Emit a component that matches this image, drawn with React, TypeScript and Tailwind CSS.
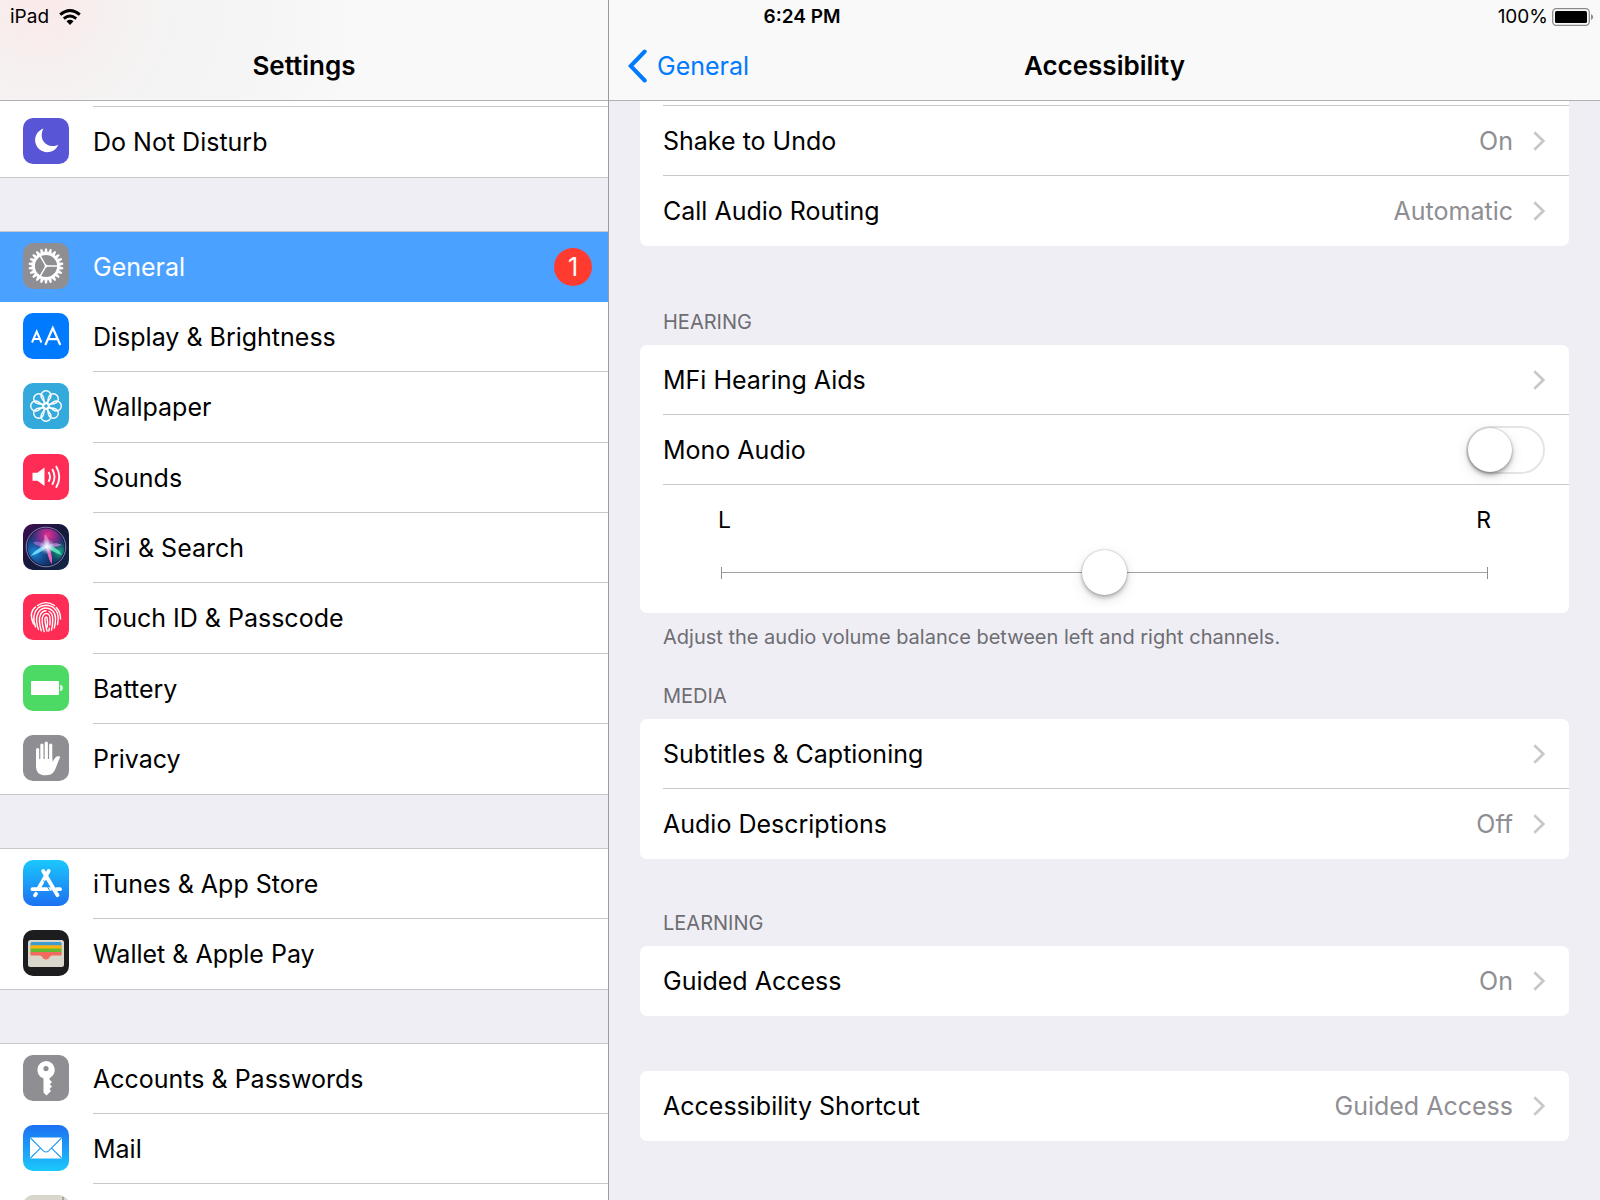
import React from "react";

/* ---------- app icons, drawn on a 46 x 46 tile ---------- */

function Tile({ fill, children }: { fill: string; children?: React.ReactNode }) {
  return (
    <svg viewBox="0 0 46 46" className="size-[46px] shrink-0" aria-hidden="true">
      <rect width="46" height="46" rx="10" fill={fill} />
      {children}
    </svg>
  );
}

const MoonIcon = () => (
  <Tile fill="#5856d6">
    <path
      d="M20.5 10.5 C14 13 11 19 12.500 25 C14.500 32 21 35.500 27.500 33.800 C31.500 32.700 34.200 30 35.200 26.500 C32.500 28.300 28 29 24 26.500 C18.500 23.500 17.200 16.500 20.500 10.500Z"
      fill="#fff"
    />
  </Tile>
);

const TEETH = Array.from({ length: 22 }, (_, i) => (i * 360) / 22);

const GearIcon = () => (
  <Tile fill="#8e8e93">
    <g transform="translate(23 23)">
      {TEETH.map((a) => (
        <path key={a} d="M-1.800 -13 L-0.900 -17.400 H0.900 L1.800 -13Z" fill="#fff" transform={`rotate(${a})`} />
      ))}
      <circle r="12.400" fill="none" stroke="#fff" strokeWidth="2.600" />
      <path d="M0 0 H12 M0 0 L-6 -10.400 M0 0 L-6 10.400" stroke="#fff" strokeWidth="1.500" />
      <circle r="1.500" fill="#fff" />
    </g>
  </Tile>
);

const DisplayIcon = () => (
  <Tile fill="#007aff">
    <path
      d="M9 29.500 L13.700 18.500 L18.400 29.500 M10.700 26 H16.700"
      fill="none"
      stroke="#fff"
      strokeWidth="2"
    />
    <path d="M22.300 32 L29.800 15 L37.300 32 M24.900 26.200 H34.700" fill="none" stroke="#fff" strokeWidth="2.200" />
  </Tile>
);

const PETALS = [0, 45, 90, 135, 180, 225, 270, 315];

const WallpaperIcon = () => (
  <Tile fill="#34aadc">
    <g transform="translate(23 23)" fill="none" stroke="#fff" strokeWidth="1.400">
      {PETALS.map((a) => (
        <path
          key={a}
          d="M0 -2.500 C-2.500 -5 -5 -7.500 -5 -10.300 A5 5 0 0 1 5 -10.300 C5 -7.500 2.500 -5 0 -2.500Z"
          transform={`rotate(${a})`}
        />
      ))}
      <circle r="2.500" />
    </g>
  </Tile>
);

const SoundsIcon = () => (
  <Tile fill="#ff2d55">
    <path d="M9.500 18.800 H14.500 L21.500 13.500 V32 L14.500 26.800 H9.500Z" fill="#fff" />
    <g fill="none" stroke="#fff" strokeWidth="1.900">
      <path d="M25.500 18 Q28.500 22.900 25.500 27.800" />
      <path d="M29.200 15 Q33.800 22.900 29.200 30.800" />
      <path d="M33 12 Q39.500 22.900 33 33.800" />
    </g>
  </Tile>
);

const SiriIcon = () => (
  <svg viewBox="0 0 46 46" className="size-[46px] shrink-0" aria-hidden="true">
    <defs>
      <linearGradient id="siriBg" x1="0" y1="0" x2="1" y2="1">
        <stop offset="0" stopColor="#3d0f52" />
        <stop offset="0.500" stopColor="#15183a" />
        <stop offset="1" stopColor="#132748" />
      </linearGradient>
      <radialGradient id="siriPink" cx="0.550" cy="0.180" r="0.500">
        <stop offset="0" stopColor="#e8308a" />
        <stop offset="0.500" stopColor="#a82c9a" stopOpacity="0.700" />
        <stop offset="1" stopColor="#5b2ca0" stopOpacity="0" />
      </radialGradient>
      <radialGradient id="siriBlue" cx="0.200" cy="0.650" r="0.550">
        <stop offset="0" stopColor="#1b8fe0" />
        <stop offset="1" stopColor="#184a9a" stopOpacity="0" />
      </radialGradient>
      <radialGradient id="siriGreen" cx="0.850" cy="0.620" r="0.380">
        <stop offset="0" stopColor="#1bb58a" />
        <stop offset="1" stopColor="#0b4a60" stopOpacity="0" />
      </radialGradient>
      <radialGradient id="siriCore">
        <stop offset="0" stopColor="#fff" />
        <stop offset="0.400" stopColor="#e6f5ff" stopOpacity="0.700" />
        <stop offset="1" stopColor="#b8e4ff" stopOpacity="0" />
      </radialGradient>
    </defs>
    <rect width="46" height="46" rx="10" fill="url(#siriBg)" />
    <circle cx="23" cy="23" r="18.500" fill="#122a5c" />
    <circle cx="23" cy="23" r="18.500" fill="url(#siriBlue)" />
    <circle cx="23" cy="23" r="18.500" fill="url(#siriGreen)" />
    <circle cx="23" cy="23" r="18.500" fill="url(#siriPink)" />
    <path d="M24 21 C18 22 12 27 7.500 32 C13 30.500 20 27 24 23Z" fill="#7fe9ff" opacity="0.850" />
    <path d="M24 21 C31 22 36 26 39 31 C33 29.500 27 26 23 23Z" fill="#5ff0c0" opacity="0.850" />
    <path d="M23 21 C24 28 25 34 28.500 40 C30 34 28 27 25 21Z" fill="#ff6ac0" opacity="0.900" />
    <path d="M23 22 C21 18 20.500 14 22 10 C26 14 26.500 18 25 22Z" fill="#f59ad8" opacity="0.650" />
    <path d="M24 22 C29 18.500 34 18.500 39 21 C34 23 29 23.500 24 23Z" fill="#c9a0e8" opacity="0.650" />
    <path d="M23 22 C18 18 14 17 10 18.500 C13 21.500 18 23 23 23.500Z" fill="#b48ae8" opacity="0.550" />
    <circle cx="24" cy="22.500" r="8" fill="url(#siriCore)" />
    <circle cx="23" cy="23" r="19.800" fill="none" stroke="#8d8bb8" strokeWidth="0.900" />
  </svg>
);

const TouchIdIcon = () => (
  <Tile fill="#ff2d55">
    <g fill="none" stroke="#fff" strokeWidth="1.400" strokeLinecap="round">
      <path d="M14.500 11.500 Q23 5.800 31.500 11.500" />
      <path d="M33.300 13.500 Q37.500 18 37.600 25" />
      <path d="M10.500 30 C7 22 8.500 16 12.500 13" />
      <path d="M12.600 33 C10.500 28 10.500 25 11 22 C12.500 14 18 11.300 23 11.300 C30 11.300 35 16.500 35.200 24 Q35.200 27.500 34.500 30.500" />
      <path d="M15.500 35.500 C13.500 30 13 26 14 22 C15.500 16.500 19 14 23 14 C28 14 32.400 18 32.500 24 C32.500 28 32.200 31 31.300 34" />
      <path d="M18.300 36.800 C16.300 30 16 27 16.600 23.500 C17.300 19.500 19.500 17 23 16.800" />
      <path d="M26 17.500 Q29.700 19.500 29.700 24.500 C29.800 29 29.500 32.500 28.500 36" />
      <path d="M21.200 37.500 C19.200 31 18.800 27 19.300 24 C20 21 21.500 19.600 23.200 19.600 C25.500 19.600 27 21.800 27 24.500 Q27.200 28 26.900 31" />
      <path d="M26.300 34.200 L25.800 37" />
      <path d="M24 37 C22.500 31 21.700 27 22 24.500 Q22.700 22 24 23.600 C24.600 26 24.600 30 24.300 33" />
    </g>
  </Tile>
);

const BatteryIcon = () => (
  <Tile fill="#4cd964">
    <rect x="8" y="16" width="28" height="14" rx="1" fill="#fff" />
    <path d="M37.300 19.800 C40.600 20.300 40.600 25.700 37.300 26.200Z" fill="#fff" />
  </Tile>
);

const HandIcon = () => (
  <Tile fill="#8e8e93">
    <g stroke="#fff" strokeWidth="3.200" strokeLinecap="round" fill="none">
      <path d="M14.600 14.500 V27" />
      <path d="M18.900 10 V26" />
      <path d="M23.300 8.200 V26" />
      <path d="M27.700 10.200 V27" />
    </g>
    <path
      d="M13 24 H29.300 V26.800 C31 25.500 32 21.800 34.500 21.300 C36 21 37.600 21.300 37 22.500 C34.800 27 33.500 32 31.300 36 C29.500 39.300 26.500 40.300 22.500 40.300 C16.500 40.300 13.300 37.500 13 31.500Z"
      fill="#fff"
    />
  </Tile>
);

const AppStoreIcon = () => (
  <svg viewBox="0 0 46 46" className="size-[46px] shrink-0" aria-hidden="true">
    <defs>
      <linearGradient id="storeBg" x1="0" y1="0" x2="0" y2="1">
        <stop offset="0" stopColor="#1bc8fb" />
        <stop offset="1" stopColor="#1d70f2" />
      </linearGradient>
    </defs>
    <rect width="46" height="46" rx="10" fill="url(#storeBg)" />
    <g stroke="#fff" strokeWidth="3.800" strokeLinecap="round" fill="none">
      <path d="M9.500 29.200 H27" />
      <path d="M33.500 29.200 H37" />
      <path d="M25.700 11 L15.800 28" />
      <path d="M13 33.800 L12 35.300" />
      <path d="M20.200 11 L34.500 35.200" />
    </g>
    <path d="M20.500 20.500 L28 32.500" stroke="#1f96f7" strokeWidth="1" />
  </svg>
);

const WalletIcon = () => (
  <Tile fill="#1d1d1f">
    <rect x="5" y="10" width="36" height="27" rx="2.500" fill="#d9d6cb" />
    <rect x="7.500" y="12" width="31" height="7" rx="1.500" fill="#3e9bd0" />
    <rect x="7.500" y="15.300" width="31" height="6" rx="1" fill="#fdb210" />
    <rect x="7.500" y="18.600" width="31" height="6" rx="1" fill="#62bb32" />
    <path
      d="M7.500 22 H38.500 V25.500 H29 C26.500 25.500 26.500 29.500 23 29.500 C19.500 29.500 19.500 25.500 17 25.500 H7.500Z"
      fill="#f26b5e"
    />
  </Tile>
);

const KeyIcon = () => (
  <Tile fill="#8e8e93">
    <path
      fillRule="evenodd"
      d="M23 6 A9 9 0 0 1 26.500 23.200 V24.500 L29 27 L26.800 29.300 L29 31.500 L26.500 34 L28 36 L23.500 40.500 L20.500 37.500 V23.500 A9 9 0 0 1 23 6Z M23 11 A2.600 2.600 0 1 0 23 16.200 A2.600 2.600 0 1 0 23 11Z"
      fill="#fff"
    />
  </Tile>
);

const MailIcon = () => (
  <svg viewBox="0 0 46 46" className="size-[46px] shrink-0" aria-hidden="true">
    <defs>
      <linearGradient id="mailBg" x1="0" y1="0" x2="0" y2="1">
        <stop offset="0" stopColor="#1d70f2" />
        <stop offset="1" stopColor="#1bc8fb" />
      </linearGradient>
    </defs>
    <rect width="46" height="46" rx="10" fill="url(#mailBg)" />
    <rect x="7" y="12.500" width="32" height="21" rx="1" fill="#fff" />
    <path
      d="M7.500 13 L20.300 25.800 Q23 28.200 25.700 25.800 L38.500 13 M7.500 33 L17.500 23.200 M38.500 33 L28.500 23.200"
      fill="none"
      stroke="#1e9bf7"
      strokeWidth="1.100"
    />
  </svg>
);

const ContactsIcon = () => (
  <Tile fill="#d9d6cb">
    <rect x="39" y="2" width="2" height="20" fill="#a8a69c" />
  </Tile>
);

/* ---------- status bar glyphs ---------- */

const WifiGlyph = () => (
  <svg viewBox="0 0 22 16" className="h-4 w-[22px]" aria-label="Wi-Fi">
    <g fill="none" stroke="#000" strokeWidth="2.900">
      <path d="M1.200 5.600 Q11 -2.600 20.800 5.600" />
      <path d="M4.800 9.600 Q11 4.400 17.200 9.600" />
    </g>
    <path d="M7.500 12.300 Q11 9.400 14.500 12.300 L11 16Z" fill="#000" />
  </svg>
);

const BatteryGlyph = () => (
  <svg viewBox="0 0 42 18" className="h-[18px] w-[42px]" aria-label="Battery full">
    <rect x="0.700" y="0.700" width="36.600" height="16.600" rx="3.500" fill="none" stroke="#8c8c8c" strokeWidth="1.300" />
    <rect x="3" y="3" width="32" height="12" rx="1.500" fill="#000" />
    <path d="M39 6 Q43.500 9 39 12Z" fill="#8c8c8c" />
  </svg>
);

const Chevron = () => (
  <svg viewBox="0 0 12 20" className="h-5 w-3 shrink-0" aria-hidden="true">
    <path d="M1.300 1.300 L10.300 10 L1.300 18.700" fill="none" stroke="#c7c7cc" strokeWidth="2.600" />
  </svg>
);

/* ---------- sidebar ---------- */

type Entry = { label: string; icon: React.ReactNode; badge?: number; selected?: boolean };

const GROUPS: Entry[][] = [
  [
    { label: "General", icon: <GearIcon />, badge: 1, selected: true },
    { label: "Display & Brightness", icon: <DisplayIcon /> },
    { label: "Wallpaper", icon: <WallpaperIcon /> },
    { label: "Sounds", icon: <SoundsIcon /> },
    { label: "Siri & Search", icon: <SiriIcon /> },
    { label: "Touch ID & Passcode", icon: <TouchIdIcon /> },
    { label: "Battery", icon: <BatteryIcon /> },
    { label: "Privacy", icon: <HandIcon /> },
  ],
  [
    { label: "iTunes & App Store", icon: <AppStoreIcon /> },
    { label: "Wallet & Apple Pay", icon: <WalletIcon /> },
  ],
  [
    { label: "Accounts & Passwords", icon: <KeyIcon /> },
    { label: "Mail", icon: <MailIcon /> },
    { label: "", icon: <ContactsIcon /> },
  ],
];

function SidebarRow({ entry }: { entry: Entry }) {
  return (
    <li className="group h-[70px] nth-[3n]:h-[71px]">
      <button
        type="button"
        aria-label={entry.label || "Contacts"}
        aria-current={entry.selected ? "page" : undefined}
        className={
          entry.selected
            ? "flex size-full bg-[#4ba1ff] text-left text-white"
            : "flex size-full bg-white text-left text-black"
        }
      >
        <span className="flex h-[68px] w-[93px] shrink-0 items-center pl-[23px]">{entry.icon}</span>
        <span
          className={
            entry.selected
              ? "flex h-full flex-1 items-center pr-4"
              : "flex h-full flex-1 items-center border-b border-[#c8c7cc] pr-4 group-last:border-transparent"
          }
        >
          <span className="flex-1">{entry.label}</span>
          {entry.badge && (
            <span className="flex size-[38px] items-center justify-center rounded-full bg-[#ff3b30] text-white">
              {entry.badge}
            </span>
          )}
        </span>
      </button>
    </li>
  );
}

function Sidebar() {
  return (
    <aside className="flex w-[38%] shrink-0 flex-col overflow-hidden">
      <header className="h-[101px] shrink-0 border-b border-[#b2b2b2] bg-[#f8f8f8] bg-[radial-gradient(circle_at_40px_0px,#fbe9e9_0px,#f6f1f1_80px,#f4f4f4_150px,#f5f5f5_220px,#f9f9f9_320px)] pt-[46px]">
        <h1 className="text-center text-[26px] leading-10 font-semibold">Settings</h1>
      </header>
      <nav className="min-h-0 flex-1 overflow-hidden" aria-label="Settings">
        <div className="flex h-[6px] flex-col justify-end bg-white pl-[93px]">
          <div className="h-px bg-[#c8c7cc]" />
        </div>
        <ul className="mb-[53px] border-b border-[#c8c7cc]">
          <SidebarRow entry={{ label: "Do Not Disturb", icon: <MoonIcon /> }} />
        </ul>
        {GROUPS.map((group, i) => (
          <ul key={i} className="mb-[53px] border-y border-[#c8c7cc]">
            {group.map((entry) => (
              <SidebarRow key={entry.label} entry={entry} />
            ))}
          </ul>
        ))}
      </nav>
    </aside>
  );
}

/* ---------- detail pane ---------- */

function LinkRow({ label, value }: { label: string; value?: string }) {
  return (
    <li className="group pl-[23px]">
      <button
        type="button"
        className="flex h-[70px] w-full items-center border-b border-[#c8c7cc] pr-6 text-left group-last:border-transparent"
      >
        <span className="flex-1">{label}</span>
        {value && <span className="mr-5 text-[#8e8e93]">{value}</span>}
        <Chevron />
      </button>
    </li>
  );
}

const Card = ({ children }: { children: React.ReactNode }) => (
  <ul className="overflow-hidden rounded-[7px] bg-white">{children}</ul>
);

const SectionTitle = ({ children, className }: { children: string; className: string }) => (
  <h3 className={`${className} mb-[9px] pl-[23px] text-[20px] leading-7 text-[#6d6d72]`}>{children}</h3>
);

function MonoAudioRow() {
  return (
    <li className="pl-[23px]">
      <label className="flex h-[70px] items-center border-b border-[#c8c7cc] pr-6">
        <span className="flex-1">Mono Audio</span>
        <input
          type="checkbox"
          role="switch"
          className="h-12 w-[79px] appearance-none rounded-full border-2 border-[#e5e5e5] bg-white before:block before:size-11 before:rounded-full before:bg-white before:shadow-[0_3px_4px_rgba(0,0,0,0.3),0_0_2px_rgba(0,0,0,0.3),0_4px_14px_rgba(0,0,0,0.12)] checked:border-[#4cd964] checked:bg-[#4cd964] checked:before:ml-[31px]"
        />
      </label>
    </li>
  );
}

function BalanceRow() {
  return (
    <li className="h-32 pt-5">
      <div className="flex h-[30px] justify-between px-[78px] text-[23px] leading-[30px]">
        <span>L</span>
        <span>R</span>
      </div>
      <div className="relative mx-[81px] mt-[15px] h-[45px]">
        <div className="absolute inset-0 flex items-center">
          <div className="h-3 w-px bg-[#8e8e93]" />
          <div className="h-px flex-1 bg-[#a2a2a6]" />
          <div className="h-3 w-px bg-[#8e8e93]" />
        </div>
        <input
          type="range"
          min={-50}
          max={50}
          defaultValue={0}
          aria-label="Left and right channel balance"
          className="relative block h-[45px] w-full appearance-none bg-transparent [&::-webkit-slider-thumb]:size-[45px] [&::-webkit-slider-thumb]:appearance-none [&::-webkit-slider-thumb]:rounded-full [&::-webkit-slider-thumb]:bg-white [&::-webkit-slider-thumb]:shadow-[0_3px_4px_rgba(0,0,0,0.22),0_0_2px_rgba(0,0,0,0.3),0_4px_14px_rgba(0,0,0,0.12)]"
        />
      </div>
    </li>
  );
}

function Detail() {
  return (
    <main className="flex min-w-0 flex-1 flex-col border-l border-[#9a9aa0]">
      <header className="grid h-[101px] shrink-0 grid-cols-[1fr_auto_1fr] items-center border-b border-[#b2b2b2] bg-[#f9f9f9] pt-[32px]">
        <button type="button" className="flex items-center gap-[10px] pl-[19px] text-left text-[#007aff]">
          <svg viewBox="0 0 19 34" className="h-[34px] w-[19px]" aria-hidden="true">
            <path
              d="M16.700 2.500 L2.700 17 L16.700 31.500"
              fill="none"
              stroke="#007aff"
              strokeWidth="4"
              strokeLinecap="round"
            />
          </svg>
          General
        </button>
        <h2 className="text-[26px] font-semibold">Accessibility</h2>
      </header>
      <div className="min-h-0 flex-1 overflow-hidden px-[31px]">
        <ul className="overflow-hidden rounded-b-[7px] bg-white">
          <li className="flex h-[5px] flex-col justify-end pl-[23px]" aria-hidden="true">
            <div className="h-px bg-[#c8c7cc]" />
          </li>
          <LinkRow label="Shake to Undo" value="On" />
          <LinkRow label="Call Audio Routing" value="Automatic" />
        </ul>

        <SectionTitle className="mt-[62px]">HEARING</SectionTitle>
        <Card>
          <LinkRow label="MFi Hearing Aids" />
          <MonoAudioRow />
          <BalanceRow />
        </Card>
        <p className="mt-[10px] pl-[23px] text-[20px] leading-7 text-[#6d6d72]">
          Adjust the audio volume balance between left and right channels.
        </p>

        <SectionTitle className="mt-[31px]">MEDIA</SectionTitle>
        <Card>
          <LinkRow label="Subtitles & Captioning" />
          <LinkRow label="Audio Descriptions" value="Off" />
        </Card>

        <SectionTitle className="mt-[50px]">LEARNING</SectionTitle>
        <Card>
          <LinkRow label="Guided Access" value="On" />
        </Card>

        <div className="mt-[55px]">
          <Card>
            <LinkRow label="Accessibility Shortcut" value="Guided Access" />
          </Card>
        </div>
      </div>
    </main>
  );
}

function StatusBar() {
  return (
    <div className="absolute inset-x-0 top-0 grid h-[33px] grid-cols-[1fr_auto_1fr] items-center pr-1.5 pl-[10px] text-[19px] leading-6">
      <div className="flex items-center gap-[10px]">
        <span>iPad</span>
        <WifiGlyph />
      </div>
      <time className="font-semibold">6:24 PM</time>
      <div className="flex items-center justify-end gap-1">
        <span>100%</span>
        <BatteryGlyph />
      </div>
    </div>
  );
}

export default function App() {
  return (
    <div className="relative flex h-screen overflow-hidden bg-[#efeef5] font-['Inter',sans-serif] text-[25px] leading-8 text-black">
      <Sidebar />
      <Detail />
      <StatusBar />
    </div>
  );
}
